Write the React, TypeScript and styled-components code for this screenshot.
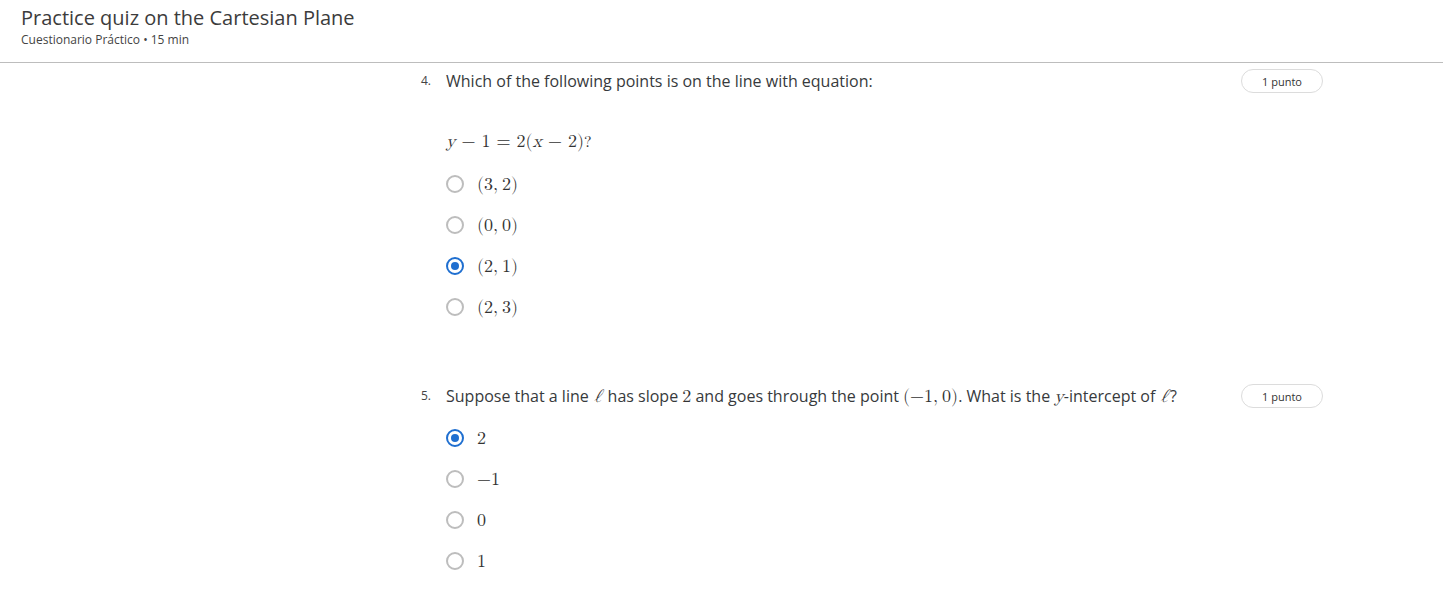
import React from "react";
import styled, { createGlobalStyle } from "styled-components";

const Global = createGlobalStyle`
  html, body { margin: 0; padding: 0; background: #fff; }
  body { font-family: "Open Sans", "Liberation Sans", sans-serif; color: #333; }
`;

const Page = styled.div`
  width: 1443px;
  min-height: 599px;
`;

const Header = styled.header`
  height: 63px;
  box-sizing: border-box;
  padding: 4px 21px 0;
  border-bottom: 1px solid #bdbdbd;
`;

const Title = styled.h1`
  margin: 0;
  font-size: 20px;
  line-height: 27px;
  font-weight: 400;
  color: #3c3c3c;
`;

const Subtitle = styled.div`
  font-size: 12px;
  line-height: 16px;
  color: #444;
  margin-top: 1px;
`;

const Main = styled.main`
  padding: 6px 0 0 421px;
  width: 902px;
`;

const Question = styled.section<{ $gap: number }>`
  margin-bottom: ${(p) => p.$gap}px;
`;

const Head = styled.div`
  display: grid;
  grid-template-columns: 25px 1fr 82px;
  align-items: center;
  min-height: 24px;
`;

const Num = styled.span`
  font-size: 12px;
  color: #444;
  line-height: 24px;
`;

const Prompt = styled.div`
  font-size: 16px;
  line-height: 24px;
  color: #373a3c;
`;

const Pill = styled.div`
  height: 24px;
  box-sizing: border-box;
  border: 1px solid #dcdcdc;
  border-radius: 12px;
  font-size: 11px;
  display: flex;
  align-items: center;
  justify-content: center;
  color: #333;
`;

const Body = styled.div`
  padding-left: 25px;
`;

const Equation = styled.div`
  margin-top: 35px;
  font-size: 18px;
  line-height: 24px;
`;

const M = styled.span<{ $size?: number }>`
  font-family: "Latin Modern Math", "Liberation Serif", "Times New Roman", serif;
  font-size: ${(p) => p.$size ?? 18}px;
  color: #333;
`;

const I = styled.i`
  font-style: italic;
`;

const Ell = styled.span`
  display: inline-block;
  font-style: italic;
  margin: 0 2px 0 1px;
`;

const Options = styled.div`
  margin-top: 9px;
  display: flex;
  flex-direction: column;
`;

const Option = styled.label`
  display: flex;
  align-items: center;
  height: 41px;
  gap: 13px;
`;

const Radio = styled.span<{ $on?: boolean }>`
  width: 18px;
  height: 18px;
  box-sizing: border-box;
  border-radius: 50%;
  border: 2px solid ${(p) => (p.$on ? "#1f6fd0" : "#bdbdbd")};
  display: flex;
  align-items: center;
  justify-content: center;
  &::after {
    content: "";
    width: 8px;
    height: 8px;
    border-radius: 50%;
    background: ${(p) => (p.$on ? "#1f6fd0" : "transparent")};
  }
`;

const Sp = styled.span`
  display: inline-block;
  width: 4px;
`;

type Opt = { content: React.ReactNode; on?: boolean };

const OptionList = ({ opts }: { opts: Opt[] }) => (
  <Options>
    {opts.map((o, i) => (
      <Option key={i}>
        <Radio $on={o.on} />
        <M>{o.content}</M>
      </Option>
    ))}
  </Options>
);

const pair = (a: string, b: string) => (
  <>
    ({a},<Sp />
    {b})
  </>
);

export default function App() {
  return (
    <Page>
      <Global />
      <Header>
        <Title>Practice quiz on the Cartesian Plane</Title>
        <Subtitle>Cuestionario Práctico • 15 min</Subtitle>
      </Header>
      <Main>
        <Question $gap={57}>
          <Head>
            <Num>4.</Num>
            <Prompt>Which of the following points is on the line with equation:</Prompt>
            <Pill>1 punto</Pill>
          </Head>
          <Body>
            <Equation>
              <M>
                <I>y</I> − 1 = 2(<I>x</I> − 2)
              </M>
              <M $size={16}>?</M>
            </Equation>
            <OptionList
              opts={[
                { content: pair("3", "2") },
                { content: pair("0", "0") },
                { content: pair("2", "1"), on: true },
                { content: pair("2", "3") },
              ]}
            />
          </Body>
        </Question>
        <Question $gap={0}>
          <Head>
            <Num>5.</Num>
            <Prompt>
              Suppose that a line <M><Ell>ℓ</Ell></M> has slope <M>2</M> and goes through the point{" "}
              <M>
                (−1,<Sp />0)
              </M>
              . What is the <M><I>y</I></M>-intercept of <M><Ell>ℓ</Ell></M>?
            </Prompt>
            <Pill>1 punto</Pill>
          </Head>
          <Body>
            <OptionList
              opts={[
                { content: "2", on: true },
                { content: "−1" },
                { content: "0" },
                { content: "1" },
              ]}
            />
          </Body>
        </Question>
      </Main>
    </Page>
  );
}
